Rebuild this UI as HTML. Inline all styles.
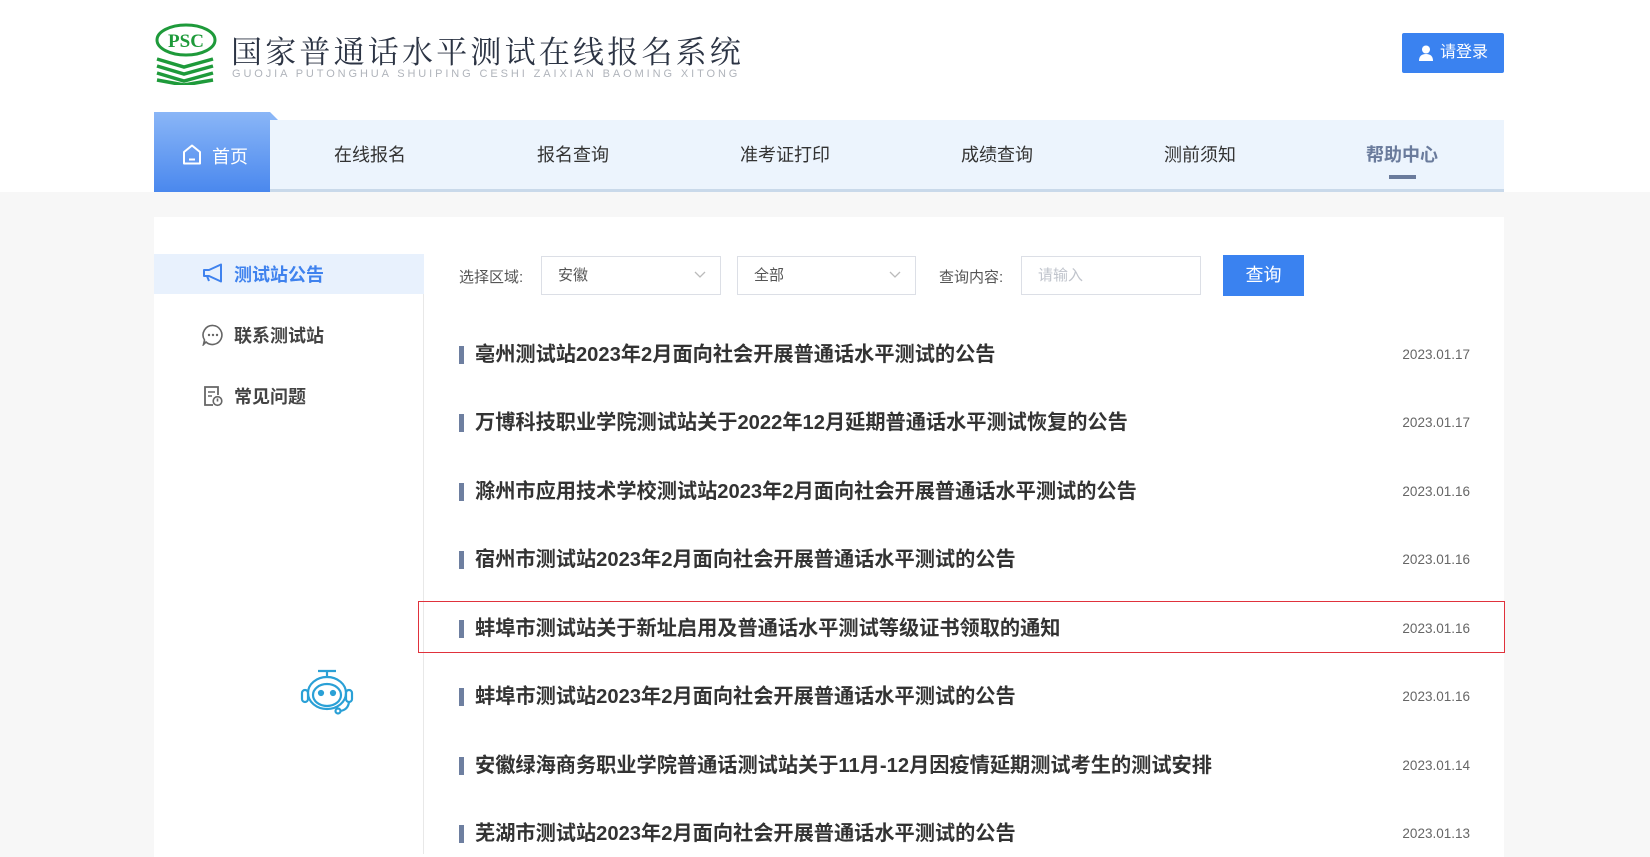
<!DOCTYPE html>
<html><head><meta charset="utf-8"><style>
*{margin:0;padding:0;box-sizing:border-box}
body{width:1650px;height:835px;overflow:hidden;background:#f7f7f7;font-family:"Liberation Sans","Noto Sans CJK SC",sans-serif;position:relative}
.top{position:absolute;left:0;top:0;width:1650px;height:192px;background:#fff}
.abs{position:absolute}
.title{left:231px;top:27px;font-size:31px;letter-spacing:3.2px;color:#2c3444;white-space:nowrap;font-family:"Noto Serif CJK SC",serif}
.py{left:232px;top:68px;font-size:11px;letter-spacing:2.9px;color:#b0b4bb;white-space:nowrap}
.login{left:1402px;top:33px;width:102px;height:40px;background:#3a82f0;border-radius:2px;color:#fff;font-size:16px;line-height:40px;padding-left:38px}
.nav{left:154px;top:120px;width:1350px;height:72px;background:#ecf4fd;border-bottom:3px solid #c9d9ea}
.home{left:154px;top:112px;width:116px;height:80px;background:linear-gradient(#8ab6f7,#4a88ee);color:#fff;font-size:18px}
.ni{top:141px;font-size:18px;color:#333;transform:translateX(-50%);white-space:nowrap}
.card{left:154px;top:217px;width:1350px;height:640px;background:#fff}
.side{left:154px;top:254px;width:270px;height:600px;border-right:1px solid #e8e8e8}
.si{left:234px;font-size:18px;font-weight:bold;color:#444}
.lbl{font-size:15px;color:#555;top:266px}
.sel{top:256px;height:39px;border:1px solid #dcdfe6;font-size:15px;color:#555;line-height:37px;padding-left:16px}
.sel svg{position:absolute;right:14px;top:14px}
.item{left:459px;width:1020px;height:30px}
.item .b{position:absolute;left:0;top:6px;width:5px;height:18px;background:#6e7fa0}
.item .t{position:absolute;left:16px;top:0;font-size:20.2px;font-weight:bold;color:#333;white-space:nowrap;line-height:30px}
.item .d{position:absolute;right:9px;top:0;font-size:13.5px;color:#666;line-height:30px}
</style></head><body>
<div class="top"></div>
<svg class="abs" style="left:154px;top:23px" width="64" height="62" viewBox="0 0 64 62">
<ellipse cx="32" cy="17" rx="29" ry="15" fill="none" stroke="#1e9a3a" stroke-width="3"/>
<text x="32" y="24" text-anchor="middle" font-family="Liberation Serif" font-weight="bold" font-size="19" fill="#1e9a3a">PSC</text>
<g stroke="#1e9a3a" stroke-width="3.5" fill="none">
<path d="M3 36 L30 44 L59 36"/><path d="M3 43 L30 51 L59 43"/><path d="M3 50 L30 58 L59 50"/><path d="M3 57 L30 62 L59 57"/>
</g></svg>
<div class="abs title">国家普通话水平测试在线报名系统</div>
<div class="abs py">GUOJIA PUTONGHUA SHUIPING CESHI ZAIXIAN BAOMING XITONG</div>
<div class="abs login"><svg class="abs" style="left:16px;top:12px" width="16" height="16" viewBox="0 0 16 16"><circle cx="8" cy="4.5" r="4" fill="#fff"/><path d="M1 16 Q1 9 8 9 Q15 9 15 16Z" fill="#fff"/></svg>请登录</div>
<div class="abs nav"></div>
<div class="abs home"><svg class="abs" style="left:28px;top:32px" width="20" height="21" viewBox="0 0 20 21"><path d="M2 8 L10 1.5 L18 8 V19.5 H2Z" fill="none" stroke="#fff" stroke-width="2" stroke-linejoin="round"/><path d="M7 15.5 H13" stroke="#fff" stroke-width="2"/></svg><span class="abs" style="left:58px;top:31px">首页</span></div>
<div class="abs" style="left:270px;top:112px;width:0;height:0;border-left:8px solid #8ab6f7;border-top:8px solid transparent"></div>
<div class="abs ni" style="left:370px">在线报名</div>
<div class="abs ni" style="left:573px">报名查询</div>
<div class="abs ni" style="left:785px">准考证打印</div>
<div class="abs ni" style="left:997px">成绩查询</div>
<div class="abs ni" style="left:1200px">测前须知</div>
<div class="abs ni" style="left:1402px;font-weight:bold;color:#6a7b9c">帮助中心</div>
<div class="abs" style="left:1389px;top:175px;width:27px;height:4px;background:#6a7b9c"></div>
<div class="abs card"></div>
<div class="abs side"></div>
<div class="abs" style="left:154px;top:254px;width:270px;height:40px;background:#e8f1fd"></div>
<svg class="abs" style="left:202px;top:263px" width="22" height="20" viewBox="0 0 22 20"><path d="M2 7 H7 L19 1.5 V18.5 L7 13 H2Z M5 13 L7 18" fill="none" stroke="#3f82ee" stroke-width="2" stroke-linejoin="round"/></svg>
<div class="abs si" style="top:261px;color:#3f82ee">测试站公告</div>
<svg class="abs" style="left:202px;top:324px" width="22" height="22" viewBox="0 0 22 22"><path d="M11 1.5 A9.5 9.5 0 1 1 4 18 L1.5 20.5 L2.5 16 A9.5 9.5 0 0 1 11 1.5Z" fill="none" stroke="#666" stroke-width="1.6"/><circle cx="7" cy="11" r="1.2" fill="#666"/><circle cx="11" cy="11" r="1.2" fill="#666"/><circle cx="15" cy="11" r="1.2" fill="#666"/></svg>
<div class="abs si" style="top:322px">联系测试站</div>
<svg class="abs" style="left:203px;top:385px" width="20" height="22" viewBox="0 0 20 22"><path d="M10 20 H2 V2 H15 V10" fill="none" stroke="#666" stroke-width="1.8"/><path d="M5 7 H12 M5 11 H9" stroke="#666" stroke-width="1.6"/><circle cx="14.5" cy="16" r="4.3" fill="none" stroke="#666" stroke-width="1.6"/><path d="M14.5 13.5 V16.5" stroke="#666" stroke-width="1.6"/></svg>
<div class="abs si" style="top:383px">常见问题</div>
<svg class="abs" style="left:298px;top:668px" width="58" height="50" viewBox="0 0 58 50" fill="none" stroke="#2aa0d6" stroke-width="2.2">
<path d="M20 3 H38 M29 3 V9"/><ellipse cx="29" cy="25" rx="19" ry="16"/><ellipse cx="29" cy="27" rx="14" ry="11"/>
<rect x="4" y="22" width="6" height="12" rx="3"/><rect x="48" y="22" width="6" height="12" rx="3"/><path d="M51 34 Q50 42 42 43"/><circle cx="40" cy="43" r="2.5"/>
<circle cx="23" cy="25" r="2" fill="#2aa0d6"/><circle cx="35" cy="25" r="2" fill="#2aa0d6"/></svg>
<div class="abs lbl" style="left:459px">选择区域:</div>
<div class="abs sel" style="left:541px;width:180px">安徽<svg width="12" height="8" viewBox="0 0 12 8"><path d="M1 1 L6 6 L11 1" fill="none" stroke="#bbb" stroke-width="1.3"/></svg></div>
<div class="abs sel" style="left:737px;width:179px">全部<svg width="12" height="8" viewBox="0 0 12 8"><path d="M1 1 L6 6 L11 1" fill="none" stroke="#bbb" stroke-width="1.3"/></svg></div>
<div class="abs lbl" style="left:939px">查询内容:</div>
<div class="abs sel" style="left:1021px;width:180px;color:#c0c4cc">请输入</div>
<div class="abs" style="left:1223px;top:255px;width:81px;height:41px;background:#3a82f0;color:#fff;font-size:18px;line-height:41px;text-align:center">查询</div>
<div class="abs item" style="top:340px"><i class="b"></i><span class="t">亳州测试站2023年2月面向社会开展普通话水平测试的公告</span><span class="d">2023.01.17</span></div>
<div class="abs item" style="top:408px"><i class="b"></i><span class="t">万博科技职业学院测试站关于2022年12月延期普通话水平测试恢复的公告</span><span class="d">2023.01.17</span></div>
<div class="abs item" style="top:477px"><i class="b"></i><span class="t">滁州市应用技术学校测试站2023年2月面向社会开展普通话水平测试的公告</span><span class="d">2023.01.16</span></div>
<div class="abs item" style="top:545px"><i class="b"></i><span class="t">宿州市测试站2023年2月面向社会开展普通话水平测试的公告</span><span class="d">2023.01.16</span></div>
<div class="abs item" style="top:614px"><i class="b"></i><span class="t">蚌埠市测试站关于新址启用及普通话水平测试等级证书领取的通知</span><span class="d">2023.01.16</span></div>
<div class="abs item" style="top:682px"><i class="b"></i><span class="t">蚌埠市测试站2023年2月面向社会开展普通话水平测试的公告</span><span class="d">2023.01.16</span></div>
<div class="abs item" style="top:751px"><i class="b"></i><span class="t">安徽绿海商务职业学院普通话测试站关于11月-12月因疫情延期测试考生的测试安排</span><span class="d">2023.01.14</span></div>
<div class="abs item" style="top:819px"><i class="b"></i><span class="t">芜湖市测试站2023年2月面向社会开展普通话水平测试的公告</span><span class="d">2023.01.13</span></div>
<div class="abs" style="left:418px;top:601px;width:1087px;height:52px;border:1.5px solid #e0323c"></div>
</body></html>
